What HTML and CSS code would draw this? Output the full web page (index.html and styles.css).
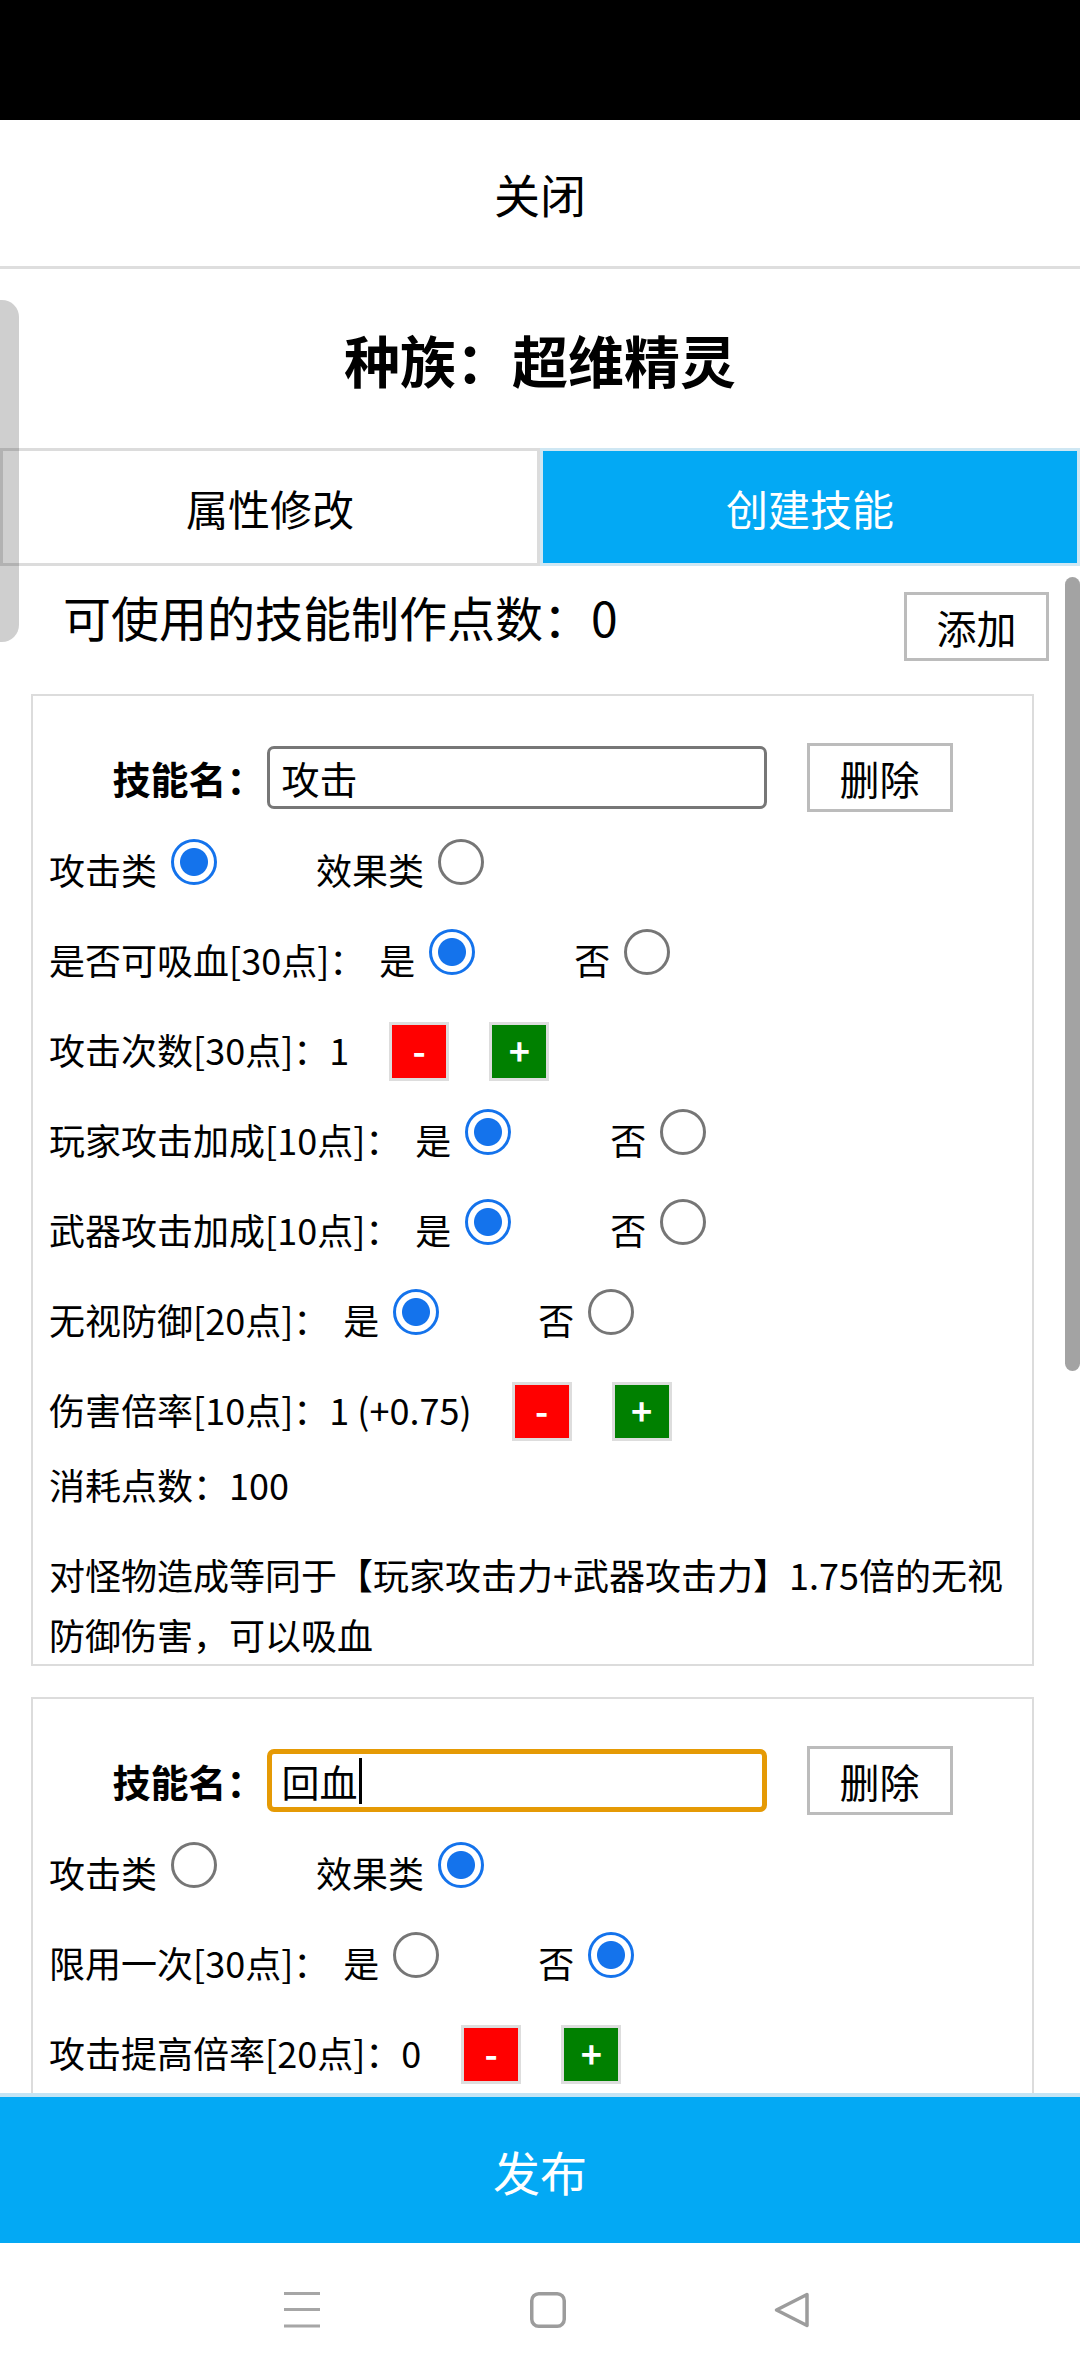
FILE: index.html
```html
<!DOCTYPE html>
<html lang="zh-CN">
<head>
<meta charset="utf-8">
<title>创建技能</title>
<link rel="stylesheet" href="styles.css">
</head>
<body>
<div class="phone">
  <div class="statusbar"></div>
  <div class="header">关闭</div>
  <div class="title">种族：超维精灵</div>
  <div class="tabs">
    <div class="tab">属性修改</div>
    <div class="tab active">创建技能</div>
  </div>
  <div class="scroll">
    <div class="content">
      <div class="points-row">
        <div class="points">可使用的技能制作点数：0</div>
        <div class="btn add">添加</div>
      </div>

      <div class="card">
        <div class="name-row">
          <span class="name-label">技能名：</span>
          <div class="name-input">攻击</div>
          <div class="btn del">删除</div>
        </div>
        <div class="row"><span class="opt">攻击类<span class="radio on"></span></span><span class="opt">效果类<span class="radio"></span></span></div>
        <div class="row">是否可吸血[30点]：<span class="opt lead">是<span class="radio on"></span></span><span class="opt">否<span class="radio"></span></span></div>
        <div class="row">攻击次数[30点]：1<span class="step minus">-</span><span class="step plus">+</span></div>
        <div class="row">玩家攻击加成[10点]：<span class="opt lead">是<span class="radio on"></span></span><span class="opt">否<span class="radio"></span></span></div>
        <div class="row">武器攻击加成[10点]：<span class="opt lead">是<span class="radio on"></span></span><span class="opt">否<span class="radio"></span></span></div>
        <div class="row">无视防御[20点]：<span class="opt lead">是<span class="radio on"></span></span><span class="opt">否<span class="radio"></span></span></div>
        <div class="row">伤害倍率[10点]：1 (+0.75)<span class="step minus">-</span><span class="step plus">+</span></div>
        <div class="row short">消耗点数：100</div>
        <p class="desc">对怪物造成等同于【玩家攻击力+武器攻击力】1.75倍的无视防御伤害，可以吸血</p>
      </div>

      <div class="card">
        <div class="name-row">
          <span class="name-label">技能名：</span>
          <div class="name-input focused">回血<span class="caret"></span></div>
          <div class="btn del">删除</div>
        </div>
        <div class="row"><span class="opt">攻击类<span class="radio"></span></span><span class="opt">效果类<span class="radio on"></span></span></div>
        <div class="row">限用一次[30点]：<span class="opt lead">是<span class="radio"></span></span><span class="opt">否<span class="radio on"></span></span></div>
        <div class="row">攻击提高倍率[20点]：0<span class="step minus">-</span><span class="step plus">+</span></div>
      </div>
    </div>
    <div class="scrollbar"><div class="thumb"></div></div>
  </div>
  <div class="publish">发布</div>
  <div class="navbar">
    <svg class="nav-icon" width="36" height="36" viewBox="0 0 36 36"><path d="M0 1.5H36M0 17.5H36M0 34H36" stroke="#a6a6a6" stroke-width="3" fill="none"/></svg>
    <svg class="nav-icon home" width="36" height="36" viewBox="0 0 36 36"><rect x="1.75" y="1.75" width="32.5" height="32.5" rx="7" fill="none" stroke="#9c9c9c" stroke-width="3.5"/></svg>
    <svg class="nav-icon back" width="36" height="36" viewBox="0 0 36 36"><path d="M33 2.5 L2.5 18 L33 33.5 Z" fill="none" stroke="#9c9c9c" stroke-width="3.5" stroke-linejoin="round"/></svg>
  </div>
  <div class="edge-handle"></div>
</div>
</body>
</html>
```

FILE: styles.css
```css
html, body {
  margin: 0;
  padding: 0;
  background: #fff;
}

.phone {
  position: relative;
  width: 1080px;
  height: 2376px;
  overflow: hidden;
  display: flex;
  flex-direction: column;
  background: #fff;
  color: #000;
  font-family: "Noto Sans CJK SC", "Noto Sans", sans-serif;
}

.statusbar {
  flex: none;
  height: 120px;
  background: #000;
}

.header {
  flex: none;
  height: 146px;
  border-bottom: 3px solid #dedede;
  display: flex;
  align-items: center;
  justify-content: center;
  font-size: 46px;
}

.title {
  flex: none;
  height: 179px;
  display: flex;
  align-items: center;
  justify-content: center;
  font-size: 56px;
  font-weight: bold;
}

.tabs {
  flex: none;
  display: flex;
  height: 118px;
}

.tab {
  flex: 1;
  box-sizing: border-box;
  border: 3px solid #dcdcdc;
  display: flex;
  align-items: center;
  justify-content: center;
  font-size: 42px;
}

.tab.active {
  background: #03a9f4;
  color: #fff;
  border-color: #cfe7f3;
}

.scroll {
  flex: 1;
  min-height: 0;
  display: flex;
}

.content {
  flex: 1;
  overflow: hidden;
}

.scrollbar {
  flex: none;
  width: 15px;
  padding-top: 11px;
}

.thumb {
  height: 794px;
  background: #a3a3a3;
  border-radius: 8px;
}

.points-row {
  display: flex;
  align-items: flex-start;
  justify-content: space-between;
  padding: 15px 16px 0 63px;
}

.points {
  font-size: 48px;
  line-height: 70px;
}

.btn {
  box-sizing: border-box;
  height: 69px;
  border: 3px solid #bcbcbc;
  background: #fff;
  display: flex;
  align-items: center;
  justify-content: center;
  font-size: 40px;
}

.add {
  width: 145px;
  margin-top: 11px;
}

.card {
  margin: 33px 31px 0;
  border: 2px solid #dcdcdc;
  padding: 47px 16px 0;
}

.card + .card {
  margin-top: 31px;
}

.name-row {
  display: flex;
  align-items: center;
  justify-content: center;
  height: 69px;
  margin-bottom: 12px;
}

.name-label {
  font-size: 38px;
  font-weight: bold;
  margin-right: 2px;
  white-space: nowrap;
}

.name-input {
  box-sizing: border-box;
  width: 500px;
  height: 63px;
  border: 3px solid #777;
  border-radius: 7px;
  padding-left: 12px;
  display: flex;
  align-items: center;
  font-size: 38px;
}

.name-input.focused {
  border: 5px solid #e59a05;
  padding-left: 10px;
}

.caret {
  width: 3px;
  height: 46px;
  background: #000;
  margin-left: 1px;
}

.del {
  width: 146px;
  margin-left: 40px;
}

.row {
  font-size: 36px;
  line-height: 90px;
  white-space: nowrap;
}

.row.short {
  line-height: 60px;
}

.opt + .opt {
  margin-left: 99px;
}

.opt.lead {
  margin-left: 14px;
}

.radio {
  display: inline-block;
  box-sizing: border-box;
  width: 46px;
  height: 46px;
  margin-left: 14px;
  border: 3px solid #767676;
  border-radius: 50%;
  vertical-align: baseline;
}

.radio.on {
  border: 3.5px solid #1473ec;
  background: radial-gradient(circle, #1473ec 0, #1473ec 13.5px, #fff 14.5px);
}

.step {
  display: inline-block;
  box-sizing: border-box;
  width: 60px;
  height: 59px;
  margin-left: 40px;
  border: 3px solid #dddddd;
  vertical-align: baseline;
  text-align: center;
  line-height: 48px;
  color: #fff;
  font-weight: bold;
  font-size: 36px;
}

.minus {
  background: #ff0000;
}

.plus {
  background: #008000;
}

.desc {
  margin: 30px 0 0;
  font-size: 36px;
  line-height: 60px;
}

.publish {
  flex: none;
  height: 146px;
  border-top: 4px solid #c4e4f4;
  background: #03a9f4;
  color: #fff;
  font-size: 47px;
  display: flex;
  align-items: center;
  justify-content: center;
}

.navbar {
  flex: none;
  height: 133px;
  display: flex;
  align-items: center;
  padding-left: 284px;
}

.nav-icon {
  display: block;
}

.nav-icon.home {
  margin-left: 210px;
}

.nav-icon.back {
  margin-left: 208px;
}

.edge-handle {
  position: absolute;
  left: 0;
  top: 300px;
  width: 19px;
  height: 342px;
  background: rgba(0, 0, 0, 0.19);
  border-radius: 0 17px 17px 0;
}
```
